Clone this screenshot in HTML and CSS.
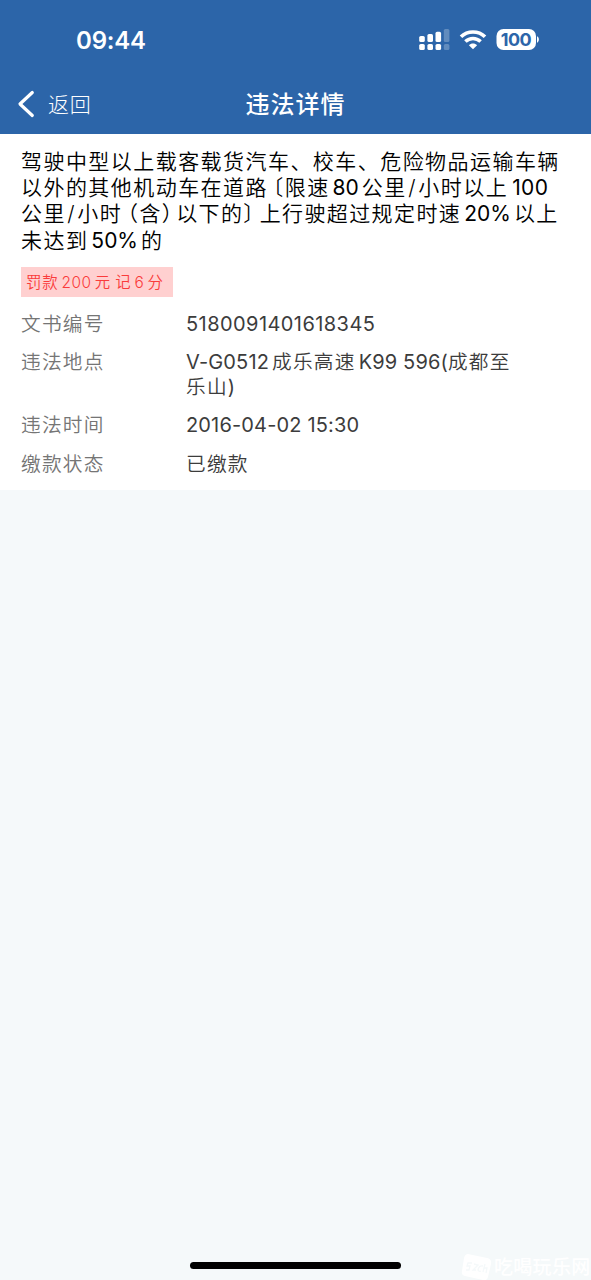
FILE: index.html
```html
<!DOCTYPE html>
<html lang="zh-CN">
<head>
<meta charset="utf-8">
<title>违法详情</title>
<link rel="stylesheet" href="styles.css">
</head>
<body>
<div class="screen">
  <header class="header">
    <div class="status">
      <span class="time">09:44</span>
      <svg class="indicators" width="122" height="24" viewBox="0 0 122 24">
        <g fill="#fff">
          <rect x="1.2" y="8" width="5.6" height="6" rx="1.6"/>
          <rect x="9.4" y="6" width="5.6" height="8" rx="1.6"/>
          <rect x="17.5" y="3.8" width="5.6" height="10.2" rx="1.6"/>
          <rect x="1.2" y="16" width="5.6" height="6" rx="1.6"/>
          <rect x="9.4" y="16" width="5.6" height="6" rx="1.6"/>
          <rect x="17.5" y="16" width="5.6" height="6" rx="1.6"/>
          <g opacity=".25">
            <rect x="25.8" y="1" width="5.6" height="13" rx="1.6"/>
            <rect x="25.8" y="16" width="5.6" height="6" rx="1.6"/>
          </g>
        </g>
        <g fill="none" stroke="#fff" stroke-width="3.6">
          <path d="M43 8.8C49.5 2.3 60.5 2.3 67 8.8"/>
          <path d="M47.4 13.5C51.8 9.4 58.2 9.4 62.6 13.5"/>
        </g>
        <path fill="#fff" d="M50.9 17.2C53.2 15 56.8 15 59.1 17.2L55 21.3Z"/>
        <rect x="78.5" y="1" width="39.5" height="21" rx="7" fill="#fff"/>
        <path d="M119 8.3C121.5 9.3 121.5 13.7 119 14.7Z" fill="#fff"/>
        <text class="level" x="98" y="17.9" text-anchor="middle">100</text>
      </svg>
    </div>
    <nav class="nav">
      <a class="back">
        <svg width="20" height="30" viewBox="0 0 20 30"><path d="M16.3 3.5 4 15 16.3 26.5" fill="none" stroke="#fff" stroke-width="3.2" stroke-linecap="round" stroke-linejoin="round"/></svg>
        <span>返回</span>
      </a>
      <h1 class="heading">违法详情</h1>
    </nav>
  </header>
  <main class="card">
    <div class="offence">
      <div>驾驶中型以上载客载货汽车、校车、危险物品运输车辆</div>
      <div>以外的其他机动车在道路<span class="open">〔</span>限速<span class="num">80</span>公里<span class="slash">/</span>小时以上<span class="num last">100</span></div>
      <div class="tight">公里<span class="slash">/</span>小时<span class="paren-open">（</span>含<span class="paren-close">）</span>以下的<span class="close">〕</span>上行驶超过规定时速<span class="num">20%</span>以上</div>
      <div>未达到<span class="num">50%</span>的</div>
    </div>
    <div class="tag">罚款<span class="num">200</span>元<span class="gap"></span>记<span class="num">6</span>分</div>
    <dl class="details">
      <dt>文书编号</dt><dd><span class="latin serial">5180091401618345</span></dd>
      <dt>违法地点</dt><dd><span class="latin">V-G0512</span><span class="gap"></span>成乐高速<span class="gap"></span><span class="latin">K99 596(</span>成都至<br>乐山<span class="latin">)</span></dd>
      <dt>违法时间</dt><dd><span class="latin">2016-04-02 15:30</span></dd>
      <dt>缴款状态</dt><dd>已缴款</dd>
    </dl>
  </main>
  <div class="watermark">
    <svg width="32" height="28" viewBox="0 0 32 28"><path d="M7 1 26 5Q31 6 30 11L27 24Q26 28 22 27L4 23Q0 22 1 18L3 5Q4 1 7 1Z" fill="#fff"/><path d="M11 10H7L6 13H9L8 17H5M13 11 17 12 12 17H15M22 13Q18 12 17 17Q18 19 20 18M24 11 22 19M23 15 26 15 25 20" fill="none" stroke="#f5f9fa" stroke-width="1.3"/></svg>
    <span>吃喝玩乐网</span>
  </div>
  <div class="home-bar"></div>
</div>
</body>
</html>
```
FILE: styles.css
```css
* { box-sizing: border-box; }
body {
  margin: 0;
  font-family: Inter, "Noto Sans CJK SC", sans-serif;
  font-weight: 350;
  text-autospace: no-autospace;
}
.screen {
  position: relative;
  width: 591px;
  height: 1280px;
  overflow: hidden;
  background: #f5f9fa;
}
.header { height: 134px; background: #2c65a9; color: #fff; }
.status {
  display: flex;
  justify-content: space-between;
  align-items: center;
  height: 80px;
  padding: 0 51px 0 76px;
}
.time { padding-top: 2px; font-size: 24px; font-weight: 600; line-height: 30px; letter-spacing: -0.2px; }
.level { font: 700 18px Inter, sans-serif; fill: #2c65a9; letter-spacing: -0.5px; }
.nav { display: grid; grid-template-columns: 1fr auto 1fr; align-items: center; height: 48px; }
.back { display: flex; align-items: center; gap: 12px; padding-left: 16px; font-size: 21px; font-weight: 300; letter-spacing: 0.7px; line-height: 30px; }
.back span { padding-top: 2px; }
.heading { grid-column: 2; margin: 0; padding-top: 2px; font-size: 24px; font-weight: 500; line-height: 30px; letter-spacing: 1px; }
.card { height: 356px; padding: 15px 20px 0 21px; background: #fff; }
.offence { font-size: 21px; line-height: 26px; letter-spacing: 1.45px; color: #000; white-space: nowrap; }
.offence > div { height: 26.2px; }
.offence .tight { letter-spacing: 1.4px; }
.offence .num, .latin { letter-spacing: 0; }
.offence .num { margin: 0 3px; font-weight: 380; }
.offence .last { margin-left: 4px; letter-spacing: 0.4px; }
.slash { margin: 0 1.4px; }
.open, .close, .paren-open, .paren-close { font-feature-settings: "halt"; }
.open { margin-left: 4.8px; }
.paren-open { margin-left: 5.4px; }
.paren-close { margin-right: 2.4px; }
.close { margin-right: 4.4px; }
.tag {
  width: 152px;
  height: 30px;
  margin-top: 13.2px;
  padding-left: 5px;
  background: #ffd0d0;
  color: #fa3b3b;
  font-size: 15.4px;
  line-height: 31px;
  letter-spacing: 0.8px;
  white-space: nowrap;
}
.tag .num { margin: 0 3px; letter-spacing: 0.6px; }
.tag .gap { margin-left: 4.5px; }
.details {
  display: grid;
  grid-template-columns: 165px 1fr;
  row-gap: 14px;
  margin: 15px 0 0;
  font-size: 19.7px;
  line-height: 24.5px;
  letter-spacing: 1.2px;
  white-space: nowrap;
}
.details dt { color: #757575; }
.details dd { margin: 0; color: #3c3c3c; }
.details .latin { font-size: 20px; font-weight: 400; letter-spacing: 0.15px; }
.details .serial { letter-spacing: 0.43px; }
.details .gap { margin-left: 3px; }
.watermark {
  position: absolute;
  left: 461px;
  top: 1253px;
  display: flex;
  gap: 1px;
  color: #fff;
  font-size: 19px;
  font-weight: 500;
  line-height: 29px;
  letter-spacing: 0.3px;
  white-space: nowrap;
}
.home-bar {
  position: absolute;
  left: 190px;
  top: 1262px;
  width: 211px;
  height: 7px;
  border-radius: 4px;
  background: #000;
}
```
